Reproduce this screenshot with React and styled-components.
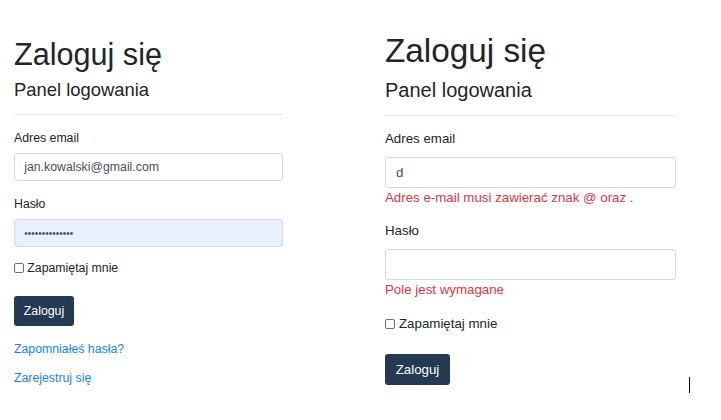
import styled, { createGlobalStyle, ThemeProvider } from "styled-components"

const GlobalStyle = createGlobalStyle`
  html, body {
    margin: 0;
    padding: 0;
    background: #fff;
  }
  body {
    font-family: "Liberation Sans", Arial, sans-serif;
    color: #212529;
  }
  * { box-sizing: border-box; }
`

// each screenshot is the same bootstrap form at a different zoom,
// so the sizes and gaps live in a theme per panel
const small = {
  top: 36.4, width: 269,
  h1: 30.6, h1L: 36,
  h4: 18.4, h4L: 22, h4Gap: 6.2,
  hrGap: 13.4,
  body: 12.3, line: 18,
  groupGap: 14, labelGap: 5.5,
  inputH: 28.5, inputPad: 9.2,
  check: 10, checkText: 3.3, checkGap: 11.6,
  btnGap: 19.3, btnH: 29.3, btnPad: 9.8,
  linkGap: [14, 11.4],
}

const large = {
  top: 31.2, width: 291,
  h1: 33.3, h1L: 40,
  h4: 20, h4L: 24, h4Gap: 6.6,
  hrGap: 13.2,
  body: 13.3, line: 20,
  groupGap: 13, labelGap: 7.9,
  inputH: 30.5, inputPad: 10,
  check: 10, checkText: 4, checkGap: 13.3,
  btnGap: 20.3, btnH: 31, btnPad: 10.7,
  linkGap: [14, 12],
}

const Page = styled.div`
  position: relative;
  display: flex;
  align-items: flex-start;
  gap: 102px;
  padding-left: 14px;
  width: 721px;
  height: 420px;
  overflow: hidden;
`
const Panel = styled.form`
  display: flex;
  flex-direction: column;
  align-items: flex-start;
  width: ${p => p.theme.width}px;
  padding-top: ${p => p.theme.top}px;
`
const Title = styled.h1`
  margin: 0;
  font-weight: 400;
  font-size: ${p => p.theme.h1}px;
  line-height: ${p => p.theme.h1L}px;
  color: #212529;
`
const Subtitle = styled.h4`
  margin: ${p => p.theme.h4Gap}px 0 0;
  font-weight: 400;
  font-size: ${p => p.theme.h4}px;
  line-height: ${p => p.theme.h4L}px;
  color: #212529;
`
const Divider = styled.hr`
  align-self: stretch;
  margin: ${p => p.theme.hrGap}px 0 0;
  border: 0;
  border-top: 1px solid #e6e6e6;
  height: 0;
`
const Group = styled.div`
  display: flex;
  flex-direction: column;
  align-self: stretch;
  margin-top: ${p => p.theme.groupGap + (p.$first ? 0.5 : 0)}px;
`
const Label = styled.label`
  font-size: ${p => p.theme.body}px;
  line-height: ${p => p.theme.line}px;
  color: #212529;
`
const Input = styled.input`
  margin-top: ${p => p.theme.labelGap}px;
  width: 100%;
  height: ${p => p.theme.inputH}px;
  padding: 0 ${p => p.theme.inputPad}px;
  border: 1px solid #d4d9df;
  border-radius: 3px;
  background: ${p => (p.$autofill ? "#e8f0fe" : "#fff")};
  color: #495057;
  font-family: "Liberation Sans", Arial, sans-serif;
  font-size: ${p => (p.type === "password" ? 10 : p.theme.body)}px;
  outline: none;
`
const Feedback = styled.div`
  margin-top: 0.5px;
  font-size: ${p => p.theme.body}px;
  line-height: ${p => p.theme.line}px;
  color: #dc3545;
`
const CheckRow = styled.label`
  display: flex;
  align-items: center;
  gap: ${p => p.theme.checkText}px;
  margin-top: ${p => p.theme.checkGap}px;
  font-size: ${p => p.theme.body}px;
  line-height: ${p => p.theme.line}px;
  color: #212529;
`
const Check = styled.input`
  appearance: none;
  margin: 0;
  width: ${p => p.theme.check}px;
  height: ${p => p.theme.check}px;
  border: 1px solid #6f6f6f;
  border-radius: 2px;
  background: #fff;
`
const Button = styled.button`
  margin-top: ${p => p.theme.btnGap}px;
  height: ${p => p.theme.btnH}px;
  padding: 0 ${p => p.theme.btnPad}px;
  border: none;
  border-radius: 3px;
  background: #233a52;
  color: #fff;
  font-family: "Liberation Sans", Arial, sans-serif;
  font-size: ${p => p.theme.body}px;
`
const LinkItem = styled.a`
  margin-top: ${p => p.theme.linkGap[p.$n]}px;
  font-size: ${p => p.theme.body}px;
  line-height: ${p => p.theme.line}px;
  color: #1a80f7;
  text-decoration: none;
`
const Cursor = styled.div`
  position: absolute;
  left: 689px;
  top: 377px;
  width: 1px;
  height: 16px;
  background: #000;
`

const LoginForm = ({ email, password, emailError, passwordError, links }) => (
  <Panel onSubmit={e => e.preventDefault()}>
    <Title>Zaloguj się</Title>
    <Subtitle>Panel logowania</Subtitle>
    <Divider />
    <Group $first>
      <Label>Adres email</Label>
      <Input type="text" value={email} readOnly />
      {emailError && <Feedback>{emailError}</Feedback>}
    </Group>
    <Group>
      <Label>Hasło</Label>
      <Input type="password" value={password} readOnly $autofill={password.length > 0} />
      {passwordError && <Feedback>{passwordError}</Feedback>}
    </Group>
    <CheckRow>
      <Check type="checkbox" />
      Zapamiętaj mnie
    </CheckRow>
    <Button type="submit">Zaloguj</Button>
    {links && (
      <>
        <LinkItem href="#" $n={0}>Zapomniałeś hasła?</LinkItem>
        <LinkItem href="#" $n={1}>Zarejestruj się</LinkItem>
      </>
    )}
  </Panel>
)

const App = () => {
  return (
    <Page>
      <GlobalStyle />
      <ThemeProvider theme={small}>
        <LoginForm email="jan.kowalski@gmail.com" password="haslo123456789" links />
      </ThemeProvider>
      <ThemeProvider theme={large}>
        <LoginForm
          email="d"
          password=""
          emailError="Adres e-mail musi zawierać znak @ oraz ."
          passwordError="Pole jest wymagane"
        />
      </ThemeProvider>
      <Cursor />
    </Page>
  )
}

export default App
